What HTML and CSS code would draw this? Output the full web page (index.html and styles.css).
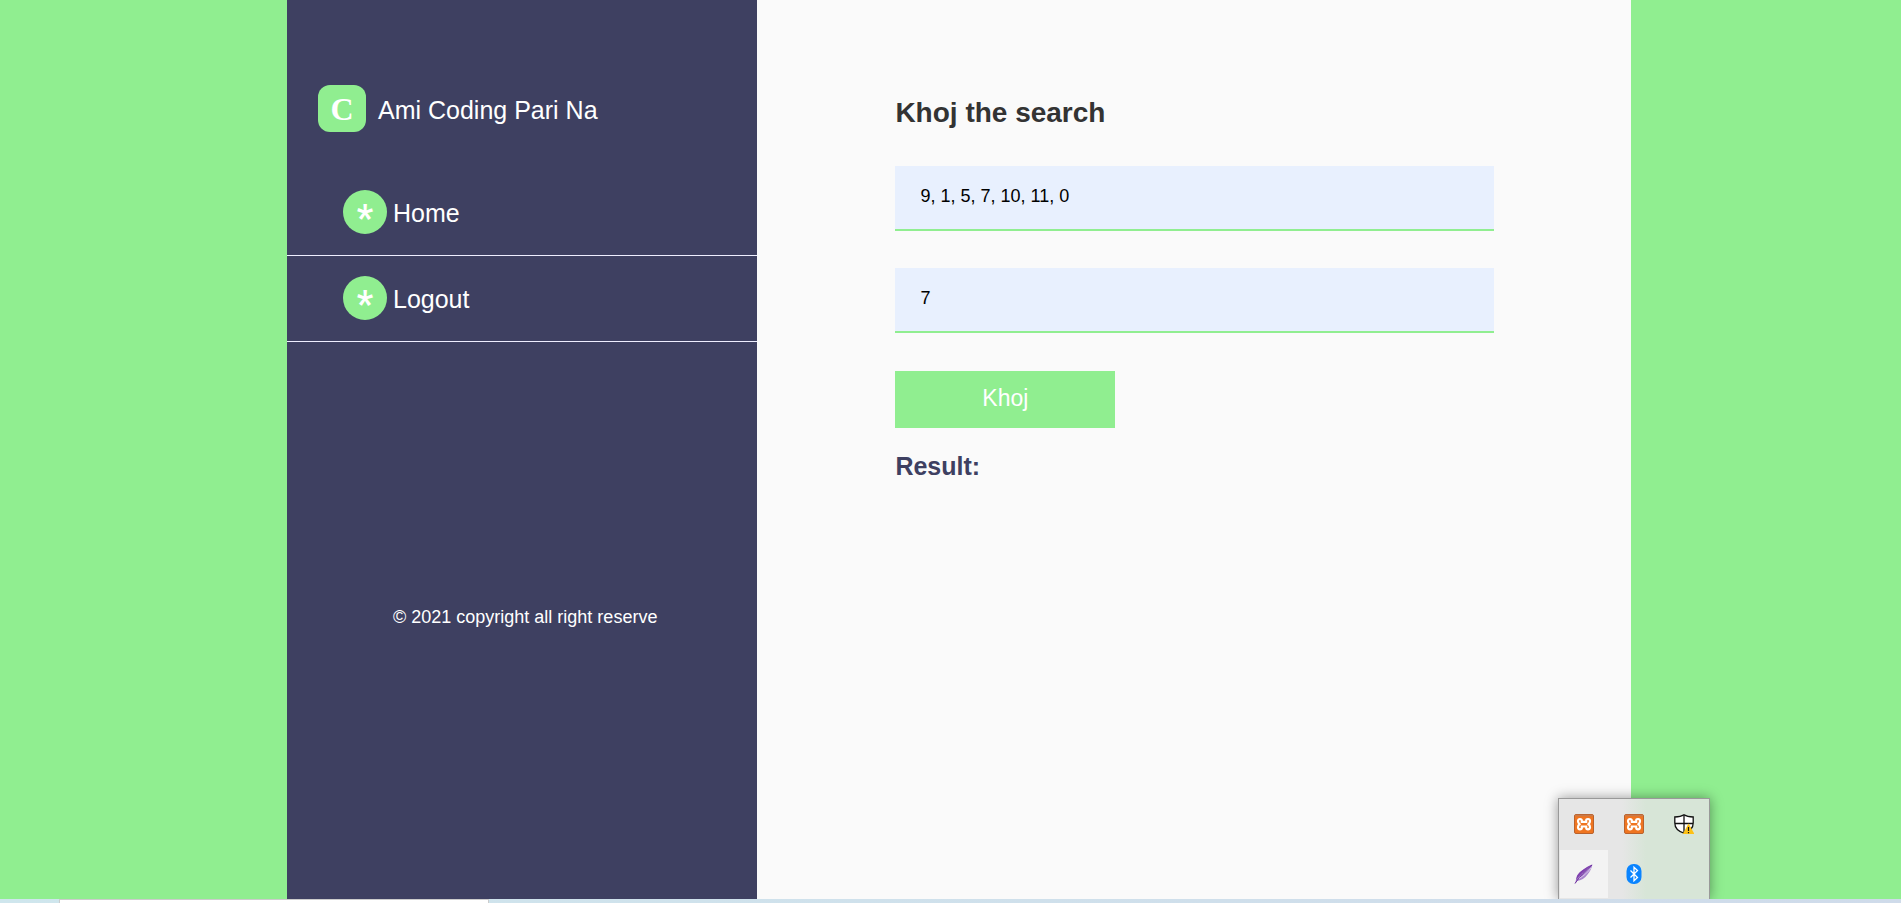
FILE: index.html
```
<!DOCTYPE html>
<html lang="en">
<head>
<meta charset="utf-8">
<title>Ami Coding Pari Na</title>
<link rel="stylesheet" href="styles.css">
</head>
<body>
<div class="page">
  <div class="shell">
    <aside class="sidebar">
      <div class="brand"><span class="brand-mark">C</span><span class="brand-name">Ami Coding Pari Na</span></div>
      <nav class="menu">
        <a class="menu-link" href="#home"><span class="bullet">*</span>Home</a>
        <a class="menu-link" href="#logout"><span class="bullet">*</span>Logout</a>
      </nav>
      <p class="copyright">© 2021 copyright all right reserve</p>
    </aside>
    <main class="content">
      <h1 class="title">Khoj the search</h1>
      <form class="search">
        <input class="field" type="text" aria-label="Input values" value="9, 1, 5, 7, 10, 11, 0">
        <input class="field" type="text" aria-label="Search value" value="7">
        <button class="submit" type="button">Khoj</button>
      </form>
      <h2 class="result">Result:</h2>
    </main>
  </div>
</div>
<div class="tray">
  <span class="tray-cell"><svg width="20" height="20" viewBox="0 0 20 20"><use href="#xampp"/></svg></span>
  <span class="tray-cell"><svg width="20" height="20" viewBox="0 0 20 20"><use href="#xampp"/></svg></span>
  <span class="tray-cell"><svg width="20" height="20" viewBox="0 0 20 20"><path d="M10 .8C7.500 2.500 4 3 .8 3v6c0 5 4 8.500 9.200 10.200C15.200 17.500 19.200 14 19.200 9V3C16 3 12.500 2.500 10 .8z" fill="#fff" stroke="#111" stroke-width="1.300"/><path d="M10 1v18M1 9.500h18" stroke="#111" stroke-width="1.300"/><path d="M14.500 9.500L20.500 20H8.800z" fill="#fdc116"/><path d="M14.500 13v4M14.500 18v1.200" stroke="#111" stroke-width="1.200"/></svg></span>
  <span class="tray-cell tray-active"><svg width="20" height="20" viewBox="0 0 20 20"><path d="M18.500.5C12 3 5 8 3 12c-1 2.500-1 4.500-2 7.500l2-2.500c4-.5 8-3 10.500-6.500 2.500-3 4-6 5-10z" fill="#a884cc"/><path d="M18.500.5C12 3 5 8 3 12L2 16C6 11 12 5 18.500.5z" fill="#7f3fae"/><path d="M1 19.500C5 13 12 6 18 1" stroke="#6c2c9c" stroke-width="1" fill="none"/><path d="M5 14.500C10 12 14 8 17 4" stroke="#d9c6ea" stroke-width="1" fill="none"/></svg></span>
  <span class="tray-cell"><svg width="20" height="20" viewBox="0 0 20 20"><rect x="2.500" width="15" height="20" rx="7" fill="#0a84ff"/><path d="M6.500 6.500l7 7L10 16.800V3.200l3.500 3.300-7 7" fill="none" stroke="#fff" stroke-width="1.300"/></svg></span>
</div>
<div class="taskbar"><div class="task-tab"></div></div>
<svg class="defs" aria-hidden="true"><symbol id="xampp" viewBox="0 0 20 20"><rect x=".5" y=".5" width="19" height="19" rx="1.500" fill="#ef7521" stroke="#b9622d"/><path d="M1 1.500h18" stroke="#c77a4c" stroke-width="1.500"/><path d="M7.800 7.800V6.500Q7.800 5 6 5T4 7Q4 9 5.500 10.200Q4 11.500 4 13.300Q4 15.300 6 15.300T7.800 13.800V12.500H12.200V13.800Q12.200 15.300 14 15.300T16 13.300Q16 11.500 14.500 10.200Q16 9 16 7Q16 5 14 5T12.200 6.500V7.800z" fill="none" stroke="#fff" stroke-width="2.200"/></symbol></svg>
</body>
</html>
```
FILE: styles.css
```
* { box-sizing: border-box; }
body {
  margin: 0;
  height: 100vh;
  display: flex;
  flex-direction: column;
  background: #90ee90;
  font-family: "Liberation Sans", Arial, sans-serif;
}
.page { flex: 1; display: flex; justify-content: center; padding-left: 17px; }
.shell { display: flex; width: 100%; max-width: 1344px; }
.sidebar { width: 35%; padding-top: 85px; background: #3e4061; color: #fff; }
.brand { display: flex; align-items: center; gap: 12px; padding-left: 31px; }
.brand-mark {
  width: 48px;
  height: 47px;
  border-radius: 12px;
  background: #90ee90;
  font: bold 32px/48px "Liberation Serif", "Times New Roman", serif;
  text-align: center;
}
.brand-name { font-size: 25px; line-height: 29px; padding-top: 4px; }
.menu { margin-top: 38px; }
.menu-link {
  display: flex;
  align-items: flex-start;
  gap: 6px;
  height: 86px;
  padding: 20px 0 0 56px;
  border-bottom: 1px solid #eef;
  color: #fff;
  font-size: 25px;
  line-height: 46px;
  text-decoration: none;
}
.bullet {
  width: 44px;
  height: 44px;
  border-radius: 50%;
  background: #90ee90;
  font: bold 36px/56px Roboto, sans-serif;
  text-align: center;
}
.copyright { margin: 265px 0 0 106px; font-size: 18px; line-height: 20px; }
.content { flex: 1; padding: 97px 137px 0 138px; background: #fafafa; }
.title { margin: 0; color: #333; font-size: 28px; line-height: 32px; }
.search { display: flex; flex-direction: column; gap: 37px; margin-top: 37px; }
.field {
  width: 100%;
  height: 65px;
  padding: 0 25px 2px;
  border: 0;
  border-bottom: 2px solid #90ee90;
  background: #e8f0fe;
  color: #000;
  font: 18px "Liberation Sans", Arial, sans-serif;
}
.submit {
  width: 220px;
  height: 57px;
  margin-top: 1px;
  padding: 0 0 2px;
  border: 0;
  background: #90ee90;
  color: #fff;
  font: 23px "Liberation Sans", Arial, sans-serif;
}
.result { margin: 24px 0 0; color: #3e4061; font-size: 25px; line-height: 29px; }
.tray {
  position: absolute;
  right: 191px;
  bottom: 4px;
  display: grid;
  grid-template-columns: repeat(3, 50px);
  width: 152px;
  height: 101px;
  border: 1px solid #999;
  border-bottom: 0;
  background: linear-gradient(90deg, #e6e6e6 42%, #d7e5d7 58%);
  box-shadow: 0 0 12px rgba(0, 0, 0, .4);
}
.tray-cell { display: flex; align-items: center; justify-content: center; height: 50px; }
.tray-active { background: #f3f3f3; border: 1px solid #e6e6e6; }
.taskbar { position: relative; height: 4px; padding-left: 59px; background: linear-gradient(90deg, #cfe6ed, #cfdbea); }
.task-tab { width: 430px; height: 4px; border: 1px solid #ccc; border-bottom: 0; background: #fff; }
.defs { position: absolute; width: 0; height: 0; }
```
